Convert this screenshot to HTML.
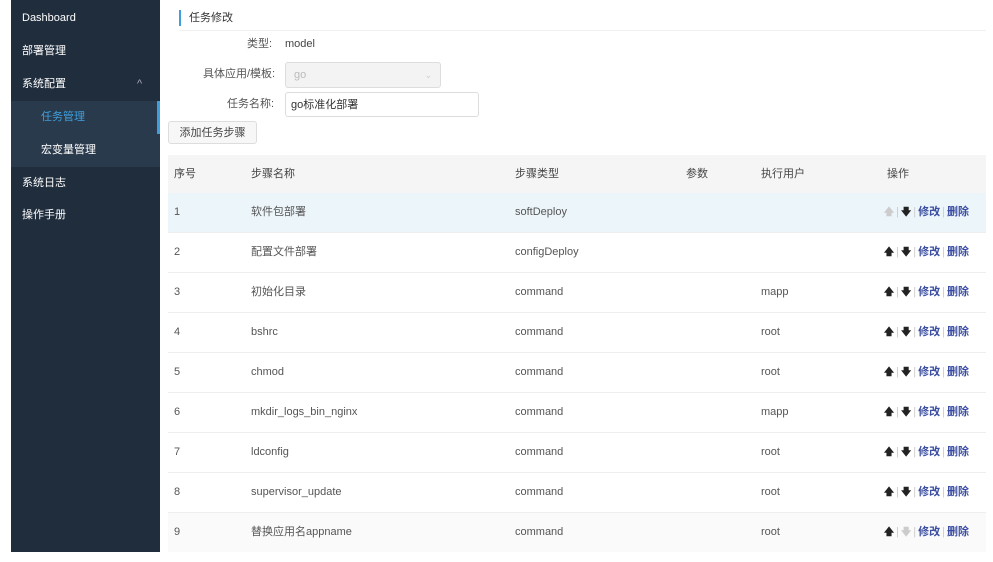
<!DOCTYPE html>
<html><head><meta charset="utf-8"><style>
*{margin:0;padding:0;box-sizing:border-box}
body{width:993px;height:562px;background:#fff;position:relative;overflow:hidden;font-family:"Liberation Sans","Noto Sans CJK SC",sans-serif;font-size:11px;color:#555;line-height:14px}
.a{position:absolute}
#sb{left:11px;top:0;width:149px;height:552px;background:#1f2d3d}
.mi{position:absolute;left:11px;color:#fff;font-size:11px}
.sub{position:absolute;left:0;width:149px;height:33px;background:#2a3a4d}
.row{position:absolute;left:168px;width:818px;height:40px;border-bottom:1px solid #eee}
.row span{position:absolute;top:0;line-height:38px;font-size:11px;color:#555}
.ops{position:absolute;right:17px;top:0;line-height:38px;font-size:11px;color:#3a4da0;font-weight:bold;white-space:nowrap}
.ops i{font-style:normal;color:#222;font-size:10px}
.ops b{color:#ccc;font-weight:normal;margin:0 2px}
</style></head><body>
<div id="sb" class="a">
 <div class="mi" style="top:11px">Dashboard</div>
 <div class="mi" style="top:44px">部署管理</div>
 <div class="mi" style="top:77px">系统配置</div>
 <div class="mi" style="top:77px;left:126px;color:#aab">^</div>
 <div class="sub" style="top:101px"></div>
 <div class="a" style="left:146px;top:101px;width:3px;height:33px;background:#3e9fdc"></div>
 <div class="mi" style="top:110px;left:30px;color:#3e9fdc">任务管理</div>
 <div class="sub" style="top:134px"></div>
 <div class="mi" style="top:143px;left:30px">宏变量管理</div>
 <div class="mi" style="top:176px">系统日志</div>
 <div class="mi" style="top:208px">操作手册</div>
</div>
<div class="a" style="left:179px;top:10px;width:2px;height:16px;background:#3e9fdc"></div>
<div class="a" style="left:189px;top:11px;font-size:11px;color:#333">任务修改</div>
<div class="a" style="left:179px;top:30px;width:807px;height:1px;background:#f0f0f0"></div>
<div class="a" style="left:247px;top:37px">类型:</div>
<div class="a" style="left:285px;top:37px;color:#444">model</div>
<div class="a" style="left:203px;top:67px">具体应用/模板:</div>
<div class="a" style="left:285px;top:62px;width:156px;height:26px;border:1px solid #ddd;border-radius:3px;background:#f3f3f3;color:#bbb;padding:5px 8px">go<span style="position:absolute;right:8px;top:5px;color:#ccc;font-size:9px">⌄</span></div>
<div class="a" style="left:227px;top:97px">任务名称:</div>
<div class="a" style="left:285px;top:92px;width:194px;height:25px;border:1px solid #ddd;border-radius:3px;background:#fff;color:#333;padding:5px 5px">go标准化部署</div>
<div class="a" style="left:168px;top:121px;width:89px;height:23px;border:1px solid #ddd;border-radius:3px;background:#f7f7f7;color:#444;padding:4px 0;text-align:center">添加任务步骤</div>
<div class="a" style="left:168px;top:155px;width:818px;height:38px;background:#f5f5f5"></div>
<div class="a" style="left:174px;top:167px;color:#444">序号</div>
<div class="a" style="left:251px;top:167px;color:#444">步骤名称</div>
<div class="a" style="left:515px;top:167px;color:#444">步骤类型</div>
<div class="a" style="left:686px;top:167px;color:#444">参数</div>
<div class="a" style="left:761px;top:167px;color:#444">执行用户</div>
<div class="a" style="left:887px;top:167px;color:#444">操作</div>

<div class="row" style="top:193px;background:#ecf5fa"><span style="left:6px">1</span><span style="left:83px">软件包部署</span><span style="left:347px">softDeploy</span><div class="ops"><i style="color:#ccc">🡅</i><b>|</b><i>🡇</i><b>|</b>修改<b>|</b>删除</div></div>
<div class="row" style="top:233px"><span style="left:6px">2</span><span style="left:83px">配置文件部署</span><span style="left:347px">configDeploy</span><div class="ops"><i>🡅</i><b>|</b><i>🡇</i><b>|</b>修改<b>|</b>删除</div></div>
<div class="row" style="top:273px"><span style="left:6px">3</span><span style="left:83px">初始化目录</span><span style="left:347px">command</span><span style="left:593px">mapp</span><div class="ops"><i>🡅</i><b>|</b><i>🡇</i><b>|</b>修改<b>|</b>删除</div></div>
<div class="row" style="top:313px"><span style="left:6px">4</span><span style="left:83px">bshrc</span><span style="left:347px">command</span><span style="left:593px">root</span><div class="ops"><i>🡅</i><b>|</b><i>🡇</i><b>|</b>修改<b>|</b>删除</div></div>
<div class="row" style="top:353px"><span style="left:6px">5</span><span style="left:83px">chmod</span><span style="left:347px">command</span><span style="left:593px">root</span><div class="ops"><i>🡅</i><b>|</b><i>🡇</i><b>|</b>修改<b>|</b>删除</div></div>
<div class="row" style="top:393px"><span style="left:6px">6</span><span style="left:83px">mkdir_logs_bin_nginx</span><span style="left:347px">command</span><span style="left:593px">mapp</span><div class="ops"><i>🡅</i><b>|</b><i>🡇</i><b>|</b>修改<b>|</b>删除</div></div>
<div class="row" style="top:433px"><span style="left:6px">7</span><span style="left:83px">ldconfig</span><span style="left:347px">command</span><span style="left:593px">root</span><div class="ops"><i>🡅</i><b>|</b><i>🡇</i><b>|</b>修改<b>|</b>删除</div></div>
<div class="row" style="top:473px"><span style="left:6px">8</span><span style="left:83px">supervisor_update</span><span style="left:347px">command</span><span style="left:593px">root</span><div class="ops"><i>🡅</i><b>|</b><i>🡇</i><b>|</b>修改<b>|</b>删除</div></div>
<div class="row" style="top:513px;height:39px;background:#fafafa;border:none"><span style="left:6px">9</span><span style="left:83px">替换应用名appname</span><span style="left:347px">command</span><span style="left:593px">root</span><div class="ops"><i>🡅</i><b>|</b><i style="color:#ccc">🡇</i><b>|</b>修改<b>|</b>删除</div></div>
</body></html>
